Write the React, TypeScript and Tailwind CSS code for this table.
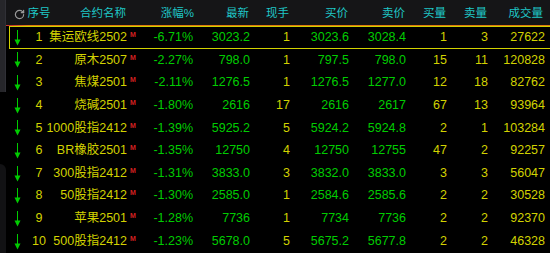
import { RotateCw } from "lucide-react";

type Row = {
  no: number;
  name: string;
  pct: string;
  last: string;
  hand: string;
  bid: string;
  ask: string;
  bidVol: string;
  askVol: string;
  vol: string;
};

const rows: Row[] = [
  { no: 1, name: "集运欧线2502", pct: "-6.71%", last: "3023.2", hand: "1", bid: "3023.6", ask: "3028.4", bidVol: "1", askVol: "3", vol: "27622" },
  { no: 2, name: "原木2507", pct: "-2.27%", last: "798.0", hand: "1", bid: "797.5", ask: "798.0", bidVol: "15", askVol: "11", vol: "120828" },
  { no: 3, name: "焦煤2501", pct: "-2.11%", last: "1276.5", hand: "1", bid: "1276.5", ask: "1277.0", bidVol: "12", askVol: "18", vol: "82762" },
  { no: 4, name: "烧碱2501", pct: "-1.80%", last: "2616", hand: "17", bid: "2616", ask: "2617", bidVol: "67", askVol: "13", vol: "93964" },
  { no: 5, name: "1000股指2412", pct: "-1.39%", last: "5925.2", hand: "5", bid: "5924.2", ask: "5924.8", bidVol: "2", askVol: "1", vol: "103284" },
  { no: 6, name: "BR橡胶2501", pct: "-1.35%", last: "12750", hand: "4", bid: "12750", ask: "12755", bidVol: "47", askVol: "2", vol: "92257" },
  { no: 7, name: "300股指2412", pct: "-1.31%", last: "3833.0", hand: "3", bid: "3832.0", ask: "3833.0", bidVol: "3", askVol: "3", vol: "56047" },
  { no: 8, name: "50股指2412", pct: "-1.30%", last: "2585.0", hand: "1", bid: "2584.6", ask: "2585.6", bidVol: "2", askVol: "2", vol: "30528" },
  { no: 9, name: "苹果2501", pct: "-1.28%", last: "7736", hand: "1", bid: "7734", ask: "7736", bidVol: "2", askVol: "2", vol: "92370" },
  { no: 10, name: "500股指2412", pct: "-1.23%", last: "5678.0", hand: "5", bid: "5675.2", ask: "5677.8", bidVol: "2", askVol: "2", vol: "46328" },
];

const DownArrow = () => (
  <svg width="7" height="16" viewBox="0 0 7 16">
    <line x1="3.5" y1="0" x2="3.5" y2="11" stroke="#00cc00" strokeWidth="1" />
    <polygon points="0.5,9.5 6.5,9.5 3.5,15.5" fill="#00cc00" />
  </svg>
);

const yellow = "text-[#d2d200]";
const green = "text-[#00cc00]";

export default function App() {
  return (
    <div
      className="w-[550px] h-[253px] bg-black overflow-hidden flex"
      style={{ fontFamily: '"Liberation Sans", "Noto Sans CJK SC", sans-serif' }}
    >
      <div className="w-[6px] shrink-0 flex flex-col">
        <div className="h-[92px] bg-[#26262a] border-r border-[#303036]" />
        <div className="h-[72px] bg-black" />
        <div className="flex-1 bg-[#121214] rounded-tr-[6px]" />
      </div>

      <div className="flex-1 flex flex-col">
        <div className="h-[25px] bg-[#151517] flex items-center pt-[3px] pl-[3px] text-[11.5px] text-[#1fc7c7] whitespace-nowrap">
          <div className="w-[16px] flex justify-end pl-[1px]">
            <RotateCw size={11} color="#9a9a9a" strokeWidth={2.6} />
          </div>
          <div className="w-[28px] text-center">序号</div>
          <div className="w-[73px] text-right">合约名称</div>
          <div className="w-[10px]" />
          <div className="w-[58px] text-right">涨幅%</div>
          <div className="w-[55px] text-right">最新</div>
          <div className="w-[40px] text-right">现手</div>
          <div className="w-[59px] text-right">买价</div>
          <div className="w-[57px] text-right">卖价</div>
          <div className="w-[41px] text-right">买量</div>
          <div className="w-[41px] text-right">卖量</div>
          <div className="w-[56px] text-right">成交量</div>
        </div>
        <div className="h-[1px] bg-gradient-to-r from-[#c8342a] from-[1%] to-[#e07a10] to-[4%]" />

        <div className="flex flex-col pl-[3px]">
          {rows.map((r) => (
            <div
              key={r.no}
              className={
                r.no === 1
                  ? "h-[22.65px] w-[560px] flex items-center text-[12.5px] whitespace-nowrap border border-[#d2d200]"
                  : "h-[22.65px] w-[560px] flex items-center text-[12.5px] whitespace-nowrap border border-transparent"
              }
            >
              <div className="w-[14px] flex justify-center pt-[1px]">
                <DownArrow />
              </div>
              <div className={`w-[30px] text-center ${yellow}`}>{r.no}</div>
              <div className={`w-[73px] flex justify-end ${yellow}`}>{r.name}</div>
              <div className="w-[10px] self-start pt-[4px] pl-[3px] text-[7px] leading-none font-bold text-[#d42020]">
                M
              </div>
              <div className={`w-[56px] text-right ${green}`}>{r.pct}</div>
              <div className={`w-[57px] text-right ${green}`}>{r.last}</div>
              <div className={`w-[40px] text-right ${yellow}`}>{r.hand}</div>
              <div className={`w-[59px] text-right ${green}`}>{r.bid}</div>
              <div className={`w-[57px] text-right ${green}`}>{r.ask}</div>
              <div className={`w-[41px] text-right ${yellow}`}>{r.bidVol}</div>
              <div className={`w-[41px] text-right ${yellow}`}>{r.askVol}</div>
              <div className={`w-[57px] text-right ${yellow}`}>{r.vol}</div>
            </div>
          ))}
        </div>
      </div>
    </div>
  );
}
